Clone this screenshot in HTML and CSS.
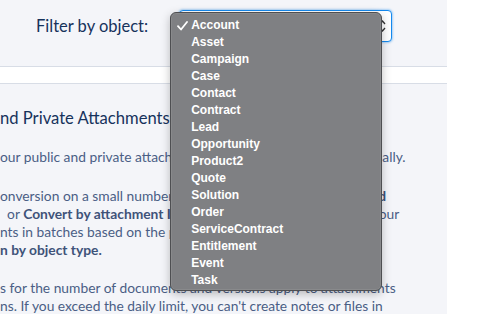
FILE: index.html
```html
<!DOCTYPE html>
<html lang="en">
<head>
<meta charset="utf-8">
<title>Attachments to Files</title>
<link rel="stylesheet" href="styles.css">
</head>
<body>
<div class="page">
  <main class="main">
    <header class="filter-bar">
      <label class="filter-label">Filter by object:</label>
      <div class="select-wrap">
        <div class="select">
          <svg class="select-arrows" width="7" height="14" viewBox="0 0 7 14"><path d="M1 5 L3.5 2 L6 5 M1 9 L3.5 12 L6 9" fill="none" stroke="#333" stroke-width="1.3"/></svg>
        </div>
        <ul class="menu">
          <li class="menu-item checked"><svg class="check" width="11" height="10" viewBox="0 0 11 10"><path d="M1 5.2 L4 8.5 L10 1" fill="none" stroke="#fff" stroke-width="1.8" stroke-linecap="round" stroke-linejoin="round"/></svg>Account</li>
          <li class="menu-item">Asset</li>
          <li class="menu-item">Campaign</li>
          <li class="menu-item">Case</li>
          <li class="menu-item">Contact</li>
          <li class="menu-item">Contract</li>
          <li class="menu-item">Lead</li>
          <li class="menu-item">Opportunity</li>
          <li class="menu-item">Product2</li>
          <li class="menu-item">Quote</li>
          <li class="menu-item">Solution</li>
          <li class="menu-item">Order</li>
          <li class="menu-item">ServiceContract</li>
          <li class="menu-item">Entitlement</li>
          <li class="menu-item">Event</li>
          <li class="menu-item">Task</li>
        </ul>
      </div>
    </header>
    <div class="strip"></div>
    <section class="content">
      <h2 class="title">nd Private Attachments</h2>
      <p class="text intro">our public and private attachments to files, individually or gradually.</p>
      <p class="text">onversion on a small number of records using <b>Convert by record</b><br>&nbsp;&nbsp;or <b>Convert by attachment ID</b>. Then you'll convert the rest of your<br>nts in batches based on the parent object.<br><b>n by object type.</b></p>
      <p class="text">s for the number of documents and versions apply to attachments<br>ns. If you exceed the daily limit, you can't create notes or files in</p>
    </section>
  </main>
  <aside class="side"></aside>
</div>
</body>
</html>
```

FILE: styles.css
```css
* { box-sizing: border-box; }
html, body { margin: 0; padding: 0; }
body {
  width: 482px;
  height: 314px;
  overflow: hidden;
  background: #ffffff;
  font-family: Lato, "Open Sans", sans-serif;
}
.page {
  display: flex;
  height: 314px;
}
.main {
  width: 447px;
  flex: none;
  background: #f4f5f9;
  display: flex;
  flex-direction: column;
}
.side {
  flex: 1;
  background: #ffffff;
}
.filter-bar {
  flex: none;
  height: 67px;
  border-bottom: 1px solid #d8dde6;
  display: flex;
  align-items: flex-start;
  padding: 10px 0 0 36px;
  gap: 31px;
  position: relative;
  z-index: 2;
}
.filter-label {
  height: 32px;
  line-height: 32px;
  font-size: 16.5px;
  color: #16325c;
}
.select-wrap {
  position: relative;
  width: 213px;
  height: 32px;
}
.select {
  height: 32px;
  border: 1px solid #1589ee;
  border-radius: 4px;
  background: #fff;
  box-shadow: 0 0 2px 1px rgba(21, 137, 238, 0.35);
  display: flex;
  align-items: center;
  justify-content: flex-end;
  padding-right: 5px;
}
.menu {
  position: absolute;
  left: -9px;
  top: 2px;
  width: 212px;
  height: 279px;
  margin: 0;
  padding: 4px 0 0 0;
  list-style: none;
  background: #7f8083;
  border: 1px solid #4e4f52;
  border-radius: 6px;
  box-shadow: 0 3px 10px rgba(0, 0, 0, 0.25), inset 0 0 0 1px rgba(255,255,255,0.08);
  font-family: "Liberation Sans", Arial, sans-serif;
  font-weight: bold;
  font-size: 12px;
  color: #ffffff;
  z-index: 2;
}
.menu-item {
  position: relative;
  height: 17px;
  line-height: 17px;
  padding-left: 20px;
  white-space: nowrap;
}
.check {
  position: absolute;
  left: 6px;
  top: 4px;
}
.strip {
  flex: none;
  height: 17px;
  background: #ffffff;
  border-bottom: 1px solid #d8dde6;
}
.content {
  flex: 1;
  min-height: 0;
  padding-top: 23px;
  white-space: nowrap;
  overflow: hidden;
}
.title {
  margin: 0 0 19px 0;
  font-size: 16.6px;
  line-height: 22px;
  font-weight: normal;
  color: #16325c;
}
.text {
  margin: 0 0 20px 0;
  font-size: 13.8px;
  line-height: 18px;
  color: #4a5e85;
}
.text b { color: #3f5379; }
.intro { margin-bottom: 21px; }
```
